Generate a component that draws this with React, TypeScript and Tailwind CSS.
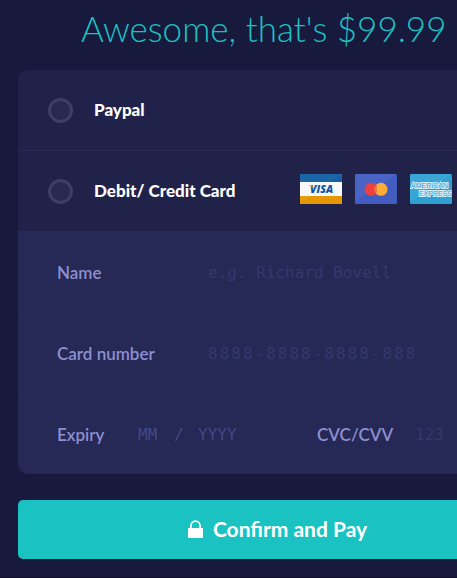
import type { ReactNode } from "react";

function PaymentOption({ id, label, children }: { id: string; label: string; children?: ReactNode }) {
  return (
    <div className="flex h-[81px] items-center border-b border-[#292b56] pl-[30px]">
      <input
        type="radio"
        id={id}
        name="method"
        className="size-[25px] shrink-0 appearance-none rounded-full border-3 border-[#3e4063] bg-[#292a52]"
      />
      <label htmlFor={id} className="w-[227px] shrink-0 pl-[21px] text-[17px] leading-6 font-black text-white">
        {label}
      </label>
      {children}
    </div>
  );
}

function VisaCard() {
  return (
    <svg role="img" aria-label="Visa" viewBox="0 0 42 30" className="h-[30px] w-[42px] shrink-0">
      <clipPath id="visa-clip">
        <rect width="42" height="30" rx="1.5" />
      </clipPath>
      <g clipPath="url(#visa-clip)">
        <rect width="42" height="30" fill="#f8f9fb" />
        <rect width="42" height="8" fill="#1660a5" />
        <path d="M0 0h42L30 8H0z" fill="#1b66a9" />
        <rect y="22" width="42" height="8" fill="#e59700" />
        <path d="M0 22h11L0 29z" fill="#e79d12" />
      </g>
      <text x="21.5" y="19" textAnchor="middle" fontFamily="Open Sans, sans-serif" fontSize="10.5" fontWeight="800" fontStyle="italic" fill="#10559f">
        VISA
      </text>
      <path d="M9 11.200h3.200l1.800 4.200c-1-1.900-2.700-3.200-5-3.800z" fill="#e59700" />
    </svg>
  );
}

function MasterCard() {
  return (
    <svg role="img" aria-label="Mastercard" viewBox="0 0 42 30" className="h-[30px] w-[42px] shrink-0">
      <rect width="42" height="30" rx="1.5" fill="#425cc0" />
      <path d="M1.500 0H42L0 27V1.500Q0 0 1.500 0z" fill="#4a64c5" />
      <circle cx="16" cy="15.300" r="6.500" fill="#ed4040" />
      <circle cx="26" cy="15.300" r="6.500" fill="#ffab38" />
      <path d="M20.800 11.500v7.600M22 13h-1.500M22 15.300h-1.500M22 17.600h-1.500" stroke="#ed5a3a" strokeWidth="0.900" />
    </svg>
  );
}

function AmexCard() {
  return (
    <svg role="img" aria-label="American Express" viewBox="0 0 42 30" className="h-[30px] w-[42px] shrink-0">
      <clipPath id="amex-clip">
        <rect width="42" height="30" rx="1.5" />
      </clipPath>
      <g clipPath="url(#amex-clip)">
        <rect width="42" height="30" fill="#30a0d3" />
        <path d="M0 0h42L0 28z" fill="#3aa6d6" />
        <g fontFamily="Liberation Sans, sans-serif" fontSize="7" fontWeight="400" fill="#2f9bcd" stroke="#d9eff9" strokeWidth="1.800" paintOrder="stroke">
          <text x="1" y="13.700">AMERICAN</text>
          <text x="9" y="22.200">EXPRESS</text>
        </g>
      </g>
    </svg>
  );
}

const labelClass = "shrink-0 text-[17px] leading-6 font-semibold text-[#8d8fd0]";
const inputClass =
  "bg-transparent font-['DejaVu_Sans_Mono',monospace] text-base text-white outline-none";

export default function App() {
  return (
    <main className="min-h-screen overflow-hidden border-b border-[#100f2b] bg-[#181a3d] pl-[18px] font-[Lato,sans-serif]">
      <h1 className="flex h-[70px] items-start pt-[6px] pl-[63px] text-[35px] leading-[44px] font-light whitespace-nowrap text-[#1ac3c2]">
        Awesome, that's $99.99
      </h1>
      <form>
        <div className="overflow-hidden rounded-l-[10px] bg-[#202249]">
          <PaymentOption id="paypal" label="Paypal" />
          <PaymentOption id="card" label="Debit/ Credit Card">
            <div className="flex gap-[13px] pb-1">
              <VisaCard />
              <MasterCard />
              <AmexCard />
            </div>
          </PaymentOption>
          <div className="bg-[#262855]">
            <div className="flex h-[81px] items-center border-b border-[#2a2c58] pt-0.5 pl-[39px]">
              <label htmlFor="name" className={`${labelClass} w-[151px]`}>Name</label>
              <input id="name" placeholder="e.g. Richard Bovell" className={`${inputClass} min-w-0 flex-1 placeholder:text-[#34396e]`} />
            </div>
            <div className="flex h-[81px] items-center border-b border-[#2a2c58] pt-0.5 pl-[39px]">
              <label htmlFor="number" className={`${labelClass} w-[151px]`}>Card number</label>
              <input id="number" placeholder="8888-8888-8888-888" className={`${inputClass} min-w-0 flex-1 tracking-[2px] placeholder:text-[#34396e]`} />
            </div>
            <div className="flex h-20 items-center pt-0.5 pl-[39px]">
              <label htmlFor="expiry" className={`${labelClass} w-[81px]`}>Expiry</label>
              <div className="flex w-[179px] shrink-0 items-center text-[#444785]">
                <input id="expiry" placeholder="MM" className={`${inputClass} w-9 placeholder:text-[#444785]`} />
                <span className="w-6 font-['DejaVu_Sans_Mono',monospace] text-base">/</span>
                <input aria-label="Expiry year" placeholder="YYYY" className={`${inputClass} w-12 placeholder:text-[#444785]`} />
              </div>
              <label htmlFor="cvc" className={`${labelClass} w-[98px]`}>CVC/CVV</label>
              <input id="cvc" placeholder="123" className={`${inputClass} min-w-0 flex-1 placeholder:text-[#34396e]`} />
            </div>
          </div>
        </div>
        <button type="button" className="mt-[26px] flex h-[59px] w-full items-center justify-center gap-[10px] rounded-l-[5px] bg-[#1ac3c2] pb-0.5 pl-20 text-[21px] leading-7 font-bold text-white">
          <svg aria-hidden="true" viewBox="0 0 15 18" className="h-[18px] w-[15px]">
            <path d="M2.900 9V5.800a4.600 4.600 0 0 1 9.200 0V9" fill="none" stroke="currentColor" strokeWidth="1.700" />
            <rect y="8" width="15" height="10" rx="0.500" fill="currentColor" />
          </svg>
          Confirm and Pay
        </button>
      </form>
    </main>
  );
}
